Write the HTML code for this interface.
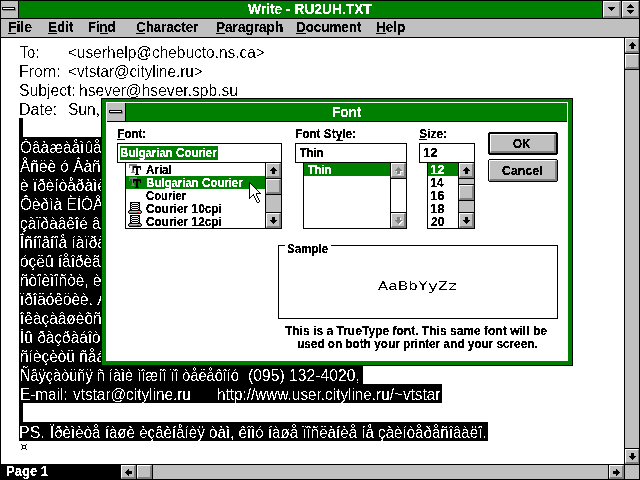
<!DOCTYPE html>
<html lang="en">
<head>
<meta charset="utf-8">
<title>Write - RU2UH.TXT</title>
<style>
*{margin:0;padding:0;box-sizing:border-box}
html,body{width:640px;height:480px;overflow:hidden;background:#fff}
body{position:relative;font-family:"Liberation Sans",sans-serif;color:#000}
.a{position:absolute}
.grp{position:absolute;left:0;top:0;width:0;height:0}
.ui{position:absolute;font-family:"Liberation Sans",sans-serif;font-weight:bold;font-size:14px;line-height:18px;height:18px;white-space:pre;transform-origin:0 0}
.sm{position:absolute;font-family:"Liberation Sans",sans-serif;font-weight:bold;font-size:13px;line-height:16px;height:16px;white-space:pre;transform-origin:0 0}
.doc{position:absolute;font-family:"Liberation Sans",sans-serif;font-size:16px;line-height:19px;height:19px;white-space:pre;transform-origin:0 0}
.mono{position:absolute;font-family:"Liberation Mono",monospace;font-size:16px;line-height:20px;height:20px;white-space:pre;transform-origin:0 0}
.doc,.mono{filter:url(#cr)}
.ui{filter:url(#cu)}
.sm{filter:url(#cb)}
.btn{position:absolute;background:#c0c0c0;border-style:solid;border-color:#fff #808080 #808080 #fff}
</style>
</head>
<body>
<svg width="0" height="0" style="position:absolute"><defs><filter id="cr" x="0" y="0" width="100%" height="100%" color-interpolation-filters="sRGB"><feComponentTransfer><feFuncA type="discrete" tableValues="0 0 0 0 0 0 0 0 0 0 0 1 1 1 1 1 1 1 1 1"/></feComponentTransfer></filter><filter id="cu" x="0" y="0" width="100%" height="100%" color-interpolation-filters="sRGB"><feComponentTransfer><feFuncA type="discrete" tableValues="0 0 1 1 1"/></feComponentTransfer></filter><filter id="cb" x="0" y="0" width="100%" height="100%" color-interpolation-filters="sRGB"><feComponentTransfer><feFuncA type="discrete" tableValues="0 1 1"/></feComponentTransfer></filter></defs></svg>
<!-- main window frame, title bar, menu bar -->
<div class="grp" id="write-window">
<div class="a" style="left:0px;top:0px;width:640px;height:1px;background:#000"></div>
<div class="a" style="left:0px;top:0px;width:1px;height:480px;background:#000"></div>
<div class="a" style="left:639px;top:0px;width:1px;height:480px;background:#000"></div>
<div class="a" style="left:1px;top:1px;width:17px;height:17px;background:#c0c0c0"></div>
<div class="a" style="left:18px;top:1px;width:1px;height:17px;background:#000"></div>
<div class="a" style="left:3px;top:8px;width:13px;height:3px;background:#808080"></div>
<div class="a" style="left:2px;top:7px;width:13px;height:3px;background:#000"></div>
<div class="a" style="left:3px;top:8px;width:11px;height:1px;background:#fff"></div>
<div class="a" style="left:19px;top:1px;width:583px;height:17px;background:#008000"></div>
<div class="a" style="left:602px;top:1px;width:1px;height:17px;background:#000"></div>
<div class="btn" style="left:603px;top:1px;width:18px;height:17px;border-width:1px 2px 2px 1px"></div>
<svg class="a" style="left:603px;top:1px" width="18" height="17" viewBox="0 0 18 17" shape-rendering="crispEdges"><path d="M5 6h7v1h-1v1h-1v1h-1v1h-1v-1h-1v-1h-1v-1h-1z" fill="#000"/></svg>
<div class="a" style="left:621px;top:1px;width:1px;height:17px;background:#000"></div>
<div class="btn" style="left:622px;top:1px;width:17px;height:17px;border-width:1px 1px 2px 1px"></div>
<svg class="a" style="left:622px;top:1px" width="17" height="17" viewBox="0 0 17 17" shape-rendering="crispEdges"><path d="M8 3h1v1h1v1h1v1h1v1h-7v-1h1v-1h1v-1h1z M5 9h7v1h-1v1h-1v1h-1v1h-1v-1h-1v-1h-1v-1h-1z" fill="#000"/></svg>
<div class="a" style="left:0px;top:18px;width:640px;height:1px;background:#000"></div>
<div class="ui" style="left:248.00px;top:0px;color:#fff;transform:scaleX(0.9841)">Write - RU2UH.TXT</div>
<div class="a" style="left:1px;top:19px;width:638px;height:18px;background:#c0c0c0"></div>
<div class="a" style="left:0px;top:37px;width:640px;height:1px;background:#000"></div>
<div class="ui" style="left:8.00px;top:18px;color:#000;transform:scaleX(1.0000)">File</div>
<div class="a" style="left:8px;top:33px;width:8px;height:1px;background:#000"></div>
<div class="ui" style="left:48.04px;top:18px;color:#000;transform:scaleX(0.9600)">Edit</div>
<div class="a" style="left:48px;top:33px;width:9px;height:1px;background:#000"></div>
<div class="ui" style="left:88.07px;top:18px;color:#000;transform:scaleX(0.9286)">Find</div>
<div class="a" style="left:100px;top:33px;width:8px;height:1px;background:#000"></div>
<div class="ui" style="left:136.05px;top:18px;color:#000;transform:scaleX(0.9531)">Character</div>
<div class="a" style="left:136px;top:33px;width:9px;height:1px;background:#000"></div>
<div class="ui" style="left:216.03px;top:18px;color:#000;transform:scaleX(0.9706)">Paragraph</div>
<div class="a" style="left:216px;top:33px;width:9px;height:1px;background:#000"></div>
<div class="ui" style="left:296.04px;top:18px;color:#000;transform:scaleX(0.9552)">Document</div>
<div class="a" style="left:296px;top:33px;width:10px;height:1px;background:#000"></div>
<div class="ui" style="left:376.03px;top:18px;color:#000;transform:scaleX(0.9655)">Help</div>
<div class="a" style="left:376px;top:33px;width:10px;height:1px;background:#000"></div>
</div>
<!-- document text -->
<div class="grp" id="document">
<div class="doc" style="left:20.00px;top:43px;color:#000;transform:scaleX(0.9000)">To:</div>
<div class="doc" style="left:68.03px;top:43px;color:#000;transform:scaleX(0.9653)">&lt;userhelp@chebucto.ns.ca&gt;</div>
<div class="doc" style="left:19.00px;top:62px;color:#000;transform:scaleX(1.0000)">From:</div>
<div class="doc" style="left:68.05px;top:62px;color:#000;transform:scaleX(0.9500)">&lt;vtstar@cityline.ru&gt;</div>
<div class="doc" style="left:19.02px;top:81px;color:#000;transform:scaleX(0.9818)">Subject:</div>
<div class="doc" style="left:79.02px;top:81px;color:#000;transform:scaleX(0.9752)">hsever@hsever.spb.su</div>
<div class="doc" style="left:19.00px;top:100px;color:#000;transform:scaleX(1.0000)">Date:</div>
<div class="doc" style="left:68.03px;top:100px;color:#000;transform:scaleX(0.9707)">Sun, 12 Oct 1997 18:24:51 +0400</div>
<div class="a" style="left:19px;top:118px;width:4px;height:19px;background:#000"></div>
<div class="a" style="left:19px;top:137px;width:460px;height:228px;background:#000"></div>
<div class="doc" style="left:19.5px;top:138px;color:#fff;transform:scaleX(0.965)">Óâàæàåìûå ãîñïîäà!</div>
<div class="doc" style="left:19.5px;top:157px;color:#fff;transform:scaleX(0.965)">Åñëè ó Âàñ åñòü ëàçåðíûé ïðèíòåð èëè êîïèðîâàëüíûé àïïàðàò</div>
<div class="doc" style="left:19.5px;top:176px;color:#fff;transform:scaleX(0.965)">è ïðèíòåðàìè ðàäîñòü â ðàáîòå, òî íàøå ïðåäëîæåíèå äëÿ Âàñ.</div>
<div class="doc" style="left:19.5px;top:195px;color:#fff;transform:scaleX(0.965)">Ôèðìà ÈÍÒÅÊ ïðåäëàãàåò óñëóãè ïî âîññòàíîâëåíèþ êàðòðèäæåé,</div>
<div class="doc" style="left:19.5px;top:214px;color:#fff;transform:scaleX(0.965)">çàïðàâêîé â òàêæå ðåìîíòîì è îáñëóæèâàíèåì îðãòåõíèêè.</div>
<div class="doc" style="left:19.5px;top:233px;color:#fff;transform:scaleX(0.965)">Îñíîâíîå íàïðàâëåíèå íàøåé ðàáîòû - êà÷åñòâî è ñðîêè,</div>
<div class="doc" style="left:19.5px;top:252px;color:#fff;transform:scaleX(0.965)">óçëû íåîðèãèíàëüíûå ìû íå ñòàâèì, òîëüêî ôèðìåííûå.</div>
<div class="doc" style="left:19.5px;top:271px;color:#fff;transform:scaleX(0.965)">ñòîèìîñòè, èìåþòñÿ ñêèäêè äëÿ ïîñòîÿííûõ êëèåíòîâ íàøèõ.</div>
<div class="doc" style="left:19.5px;top:290px;color:#fff;transform:scaleX(0.965)">ïðîäóêöèè. À òàêæå áåñïëàòíàÿ äîñòàâêà ïî ãîðîäó Ìîñêâå.</div>
<div class="doc" style="left:19.5px;top:309px;color:#fff;transform:scaleX(0.965)">îêàçàâøèõñÿ â òðóäíîé ñèòóàöèè ìû âûðó÷èì â òîò æå äåíü.</div>
<div class="doc" style="left:19.5px;top:328px;color:#fff;transform:scaleX(0.965)">Ìû ðàçðàáîòàëè ñèñòåìó ãèáêèõ öåí è áóäåì ðàäû ñîòðóäíè÷àòü.</div>
<div class="doc" style="left:19.5px;top:347px;color:#fff;transform:scaleX(0.965)">ñíèçèòü ñåáåñòîèìîñòü ñîäåðæàíèÿ îôèñíîé òåõíèêè âäâîå.</div>
<div class="a" style="left:19px;top:365px;width:344px;height:19px;background:#000"></div>
<div class="a" style="left:19px;top:384px;width:423px;height:19px;background:#000"></div>
<div class="a" style="left:19px;top:403px;width:4px;height:19px;background:#000"></div>
<div class="a" style="left:19px;top:422px;width:469px;height:19px;background:#000"></div>
<div class="doc" style="left:20.09px;top:366px;color:#fff;transform:scaleX(0.9083)">Ñâÿçàòüñÿ ñ íàìè ìîæíî ïî òåëåôîíó</div>
<div class="doc" style="left:248.02px;top:366px;color:#fff;transform:scaleX(0.9821)">(095) 132-4020,</div>
<div class="doc" style="left:20.04px;top:385px;color:#fff;transform:scaleX(0.9574)">E-mail:</div>
<div class="doc" style="left:73.00px;top:385px;color:#fff;transform:scaleX(0.9590)">vtstar@cityline.ru</div>
<div class="doc" style="left:217.04px;top:385px;color:#fff;transform:scaleX(0.9569)">http://www.user.cityline.ru/~vtstar</div>
<div class="doc" style="left:19.00px;top:423px;color:#fff;transform:scaleX(1.0000)">PS.</div>
<div class="doc" style="left:50.00px;top:423px;color:#fff;transform:scaleX(0.9457)">Ïðèìèòå íàøè èçâèíåíèÿ òàì, êîìó íàøå ïîñëàíèå íå çàèíòåðåñîâàëî.</div>
<svg class="a" style="left:21px;top:444px" width="6" height="6" viewBox="0 0 6 6" shape-rendering="crispEdges"><path d="M0 0h1v1h-1zM5 0h1v1h-1zM0 5h1v1h-1zM5 5h1v1h-1zM1 1h4v4h-4zM2 2v2h2v-2z" fill-rule="evenodd" fill="#000"/></svg>
</div>
<!-- Font dialog -->
<div class="grp" id="font-dialog">
<div class="a" style="left:101px;top:98px;width:472px;height:268px;background:#000"></div>
<div class="a" style="left:102px;top:99px;width:470px;height:266px;background:#008000"></div>
<div class="a" style="left:106px;top:102px;width:462px;height:259px;background:#fff"></div>
<div class="a" style="left:107px;top:103px;width:18px;height:18px;background:#c0c0c0"></div>
<div class="a" style="left:110px;top:111px;width:13px;height:3px;background:#808080"></div>
<div class="a" style="left:109px;top:110px;width:13px;height:3px;background:#000"></div>
<div class="a" style="left:110px;top:111px;width:11px;height:1px;background:#fff"></div>
<div class="a" style="left:125px;top:103px;width:1px;height:18px;background:#000"></div>
<div class="a" style="left:126px;top:103px;width:441px;height:18px;background:#008000"></div>
<div class="a" style="left:107px;top:121px;width:460px;height:1px;background:#000"></div>
<div class="ui" style="left:332.03px;top:103px;color:#fff;transform:scaleX(0.9655)">Font</div>
<div class="sm" style="left:117.10px;top:126px;color:#000;transform:scaleX(0.9000)">Font:</div>
<div class="a" style="left:117px;top:139px;width:8px;height:1px;background:#000"></div>
<div class="sm" style="left:295.09px;top:126px;color:#000;transform:scaleX(0.9077)">Font Style:</div>
<div class="a" style="left:336px;top:140px;width:7px;height:1px;background:#000"></div>
<div class="sm" style="left:419.07px;top:126px;color:#000;transform:scaleX(0.9286)">Size:</div>
<div class="a" style="left:419px;top:139px;width:8px;height:1px;background:#000"></div>
<div class="a" style="left:117px;top:143px;width:165px;height:20px;background:#000"></div>
<div class="a" style="left:118px;top:144px;width:163px;height:18px;background:#fff"></div>
<div class="a" style="left:295px;top:143px;width:112px;height:20px;background:#000"></div>
<div class="a" style="left:296px;top:144px;width:110px;height:18px;background:#fff"></div>
<div class="a" style="left:419px;top:143px;width:56px;height:20px;background:#000"></div>
<div class="a" style="left:420px;top:144px;width:54px;height:18px;background:#fff"></div>
<div class="a" style="left:120px;top:146px;width:98px;height:14px;background:#008000"></div>
<div class="sm" style="left:120.12px;top:145px;color:#fff;transform:scaleX(0.8807)">Bulgarian Courier</div>
<div class="sm" style="left:300.00px;top:145px;color:#000;transform:scaleX(0.8519)">Thin</div>
<div class="sm" style="left:423.00px;top:145px;color:#000;transform:scaleX(1.0000)">12</div>
<div class="a" style="left:125px;top:162px;width:157px;height:67px;background:#000"></div>
<div class="a" style="left:126px;top:163px;width:155px;height:65px;background:#fff"></div>
<div class="a" style="left:303px;top:162px;width:104px;height:67px;background:#000"></div>
<div class="a" style="left:304px;top:163px;width:102px;height:65px;background:#fff"></div>
<div class="a" style="left:427px;top:162px;width:48px;height:67px;background:#000"></div>
<div class="a" style="left:428px;top:163px;width:46px;height:65px;background:#fff"></div>
<div class="a" style="left:126px;top:176px;width:139px;height:13px;background:#008000"></div>
<svg class="a" style="left:129px;top:164px" width="12" height="11" viewBox="0 0 12 11" shape-rendering="crispEdges"><path d="M0 0h8v4h-1v-2h-2v6h1v1h-4v-1h1v-6h-2v2h-1z" fill="#808080"/><path transform="translate(4,2)" d="M0 0h8v4h-1v-2h-2v6h1v1h-4v-1h1v-6h-2v2h-1z" fill="#000"/></svg>
<div class="sm" style="left:146.00px;top:162px;color:#000;transform:scaleX(0.8929)">Arial</div>
<svg class="a" style="left:129px;top:177px" width="12" height="11" viewBox="0 0 12 11" shape-rendering="crispEdges"><path d="M0 0h8v4h-1v-2h-2v6h1v1h-4v-1h1v-6h-2v2h-1z" fill="#808080"/><path transform="translate(4,2)" d="M0 0h8v4h-1v-2h-2v6h1v1h-4v-1h1v-6h-2v2h-1z" fill="#000"/></svg>
<div class="sm" style="left:146.12px;top:175px;color:#fff;transform:scaleX(0.8807)">Bulgarian Courier</div>
<div class="sm" style="left:146.13px;top:188px;color:#000;transform:scaleX(0.8667)">Courier</div>
<svg class="a" style="left:128px;top:202px" width="14" height="12" viewBox="0 0 14 12" shape-rendering="crispEdges"><rect x="2" y="0" width="10" height="9" fill="#000"/><rect x="3" y="1" width="8" height="7" fill="#fff"/><rect x="4" y="2" width="6" height="1" fill="#000"/><rect x="4" y="4" width="6" height="1" fill="#000"/><rect x="4" y="6" width="6" height="1" fill="#000"/><path d="M3 1h1v1h-1zM10 1h1v1h-1zM3 3h1v1h-1zM10 3h1v1h-1zM3 5h1v1h-1zM10 5h1v1h-1zM3 7h1v1h-1zM10 7h1v1h-1z" fill="#000"/><rect x="1" y="8" width="12" height="4" fill="#000"/><rect x="0" y="9" width="14" height="2" fill="#000"/><rect x="1" y="9" width="12" height="2" fill="#808080"/><rect x="2" y="9" width="10" height="1" fill="#c0c0c0"/><rect x="9" y="10" width="2" height="1" fill="#f00"/></svg>
<div class="sm" style="left:146.09px;top:201px;color:#000;transform:scaleX(0.9136)">Courier 10cpi</div>
<svg class="a" style="left:128px;top:215px" width="14" height="12" viewBox="0 0 14 12" shape-rendering="crispEdges"><rect x="2" y="0" width="10" height="9" fill="#000"/><rect x="3" y="1" width="8" height="7" fill="#fff"/><rect x="4" y="2" width="6" height="1" fill="#000"/><rect x="4" y="4" width="6" height="1" fill="#000"/><rect x="4" y="6" width="6" height="1" fill="#000"/><path d="M3 1h1v1h-1zM10 1h1v1h-1zM3 3h1v1h-1zM10 3h1v1h-1zM3 5h1v1h-1zM10 5h1v1h-1zM3 7h1v1h-1zM10 7h1v1h-1z" fill="#000"/><rect x="1" y="8" width="12" height="4" fill="#000"/><rect x="0" y="9" width="14" height="2" fill="#000"/><rect x="1" y="9" width="12" height="2" fill="#808080"/><rect x="2" y="9" width="10" height="1" fill="#c0c0c0"/><rect x="9" y="10" width="2" height="1" fill="#f00"/></svg>
<div class="sm" style="left:146.09px;top:214px;color:#000;transform:scaleX(0.9136)">Courier 12cpi</div>
<div class="a" style="left:265px;top:163px;width:1px;height:65px;background:#000"></div>
<div class="a" style="left:266px;top:163px;width:15px;height:65px;background:#c0c0c0"></div>
<div class="btn" style="left:266px;top:163px;width:15px;height:15px;border-width:1px 2px 2px 1px"></div>
<div class="a" style="left:266px;top:178px;width:15px;height:1px;background:#000"></div>
<div class="btn" style="left:266px;top:213px;width:15px;height:15px;border-width:1px 2px 2px 1px"></div>
<div class="a" style="left:266px;top:212px;width:15px;height:1px;background:#000"></div>
<svg class="a" style="left:266px;top:163px" width="15" height="15" viewBox="0 0 15 15" shape-rendering="crispEdges"><path d="M7 4h1v1h1v1h1v1h1v1h-2v3h-3v-3h-2v-1h1v-1h1v-1h1z" fill="#000"/></svg>
<svg class="a" style="left:266px;top:213px" width="15" height="15" viewBox="0 0 15 15" shape-rendering="crispEdges"><path d="M6 4h3v3h2v1h-1v1h-1v1h-1v1h-1v-1h-1v-1h-1v-1h-1v-1h2z" fill="#000"/></svg>
<div class="a" style="left:266px;top:178px;width:15px;height:1px;background:#000"></div>
<div class="btn" style="left:266px;top:179px;width:15px;height:15px;border-width:1px 2px 2px 1px"></div>
<div class="a" style="left:266px;top:194px;width:15px;height:1px;background:#000"></div>
<div class="a" style="left:304px;top:163px;width:86px;height:13px;background:#008000"></div>
<div class="sm" style="left:308.00px;top:162px;color:#fff;transform:scaleX(0.8519)">Thin</div>
<div class="a" style="left:390px;top:163px;width:1px;height:65px;background:#000"></div>
<div class="a" style="left:391px;top:163px;width:15px;height:65px;background:#c0c0c0"></div>
<div class="btn" style="left:391px;top:163px;width:15px;height:15px;border-width:1px 2px 2px 1px"></div>
<div class="a" style="left:391px;top:178px;width:15px;height:1px;background:#000"></div>
<div class="btn" style="left:391px;top:213px;width:15px;height:15px;border-width:1px 2px 2px 1px"></div>
<div class="a" style="left:391px;top:212px;width:15px;height:1px;background:#000"></div>
<svg class="a" style="left:392px;top:164px" width="15" height="15" viewBox="0 0 15 15" shape-rendering="crispEdges"><path d="M7 4h1v1h1v1h1v1h1v1h-2v3h-3v-3h-2v-1h1v-1h1v-1h1z" fill="#fff"/></svg>
<svg class="a" style="left:391px;top:163px" width="15" height="15" viewBox="0 0 15 15" shape-rendering="crispEdges"><path d="M7 4h1v1h1v1h1v1h1v1h-2v3h-3v-3h-2v-1h1v-1h1v-1h1z" fill="#808080"/></svg>
<svg class="a" style="left:392px;top:214px" width="15" height="15" viewBox="0 0 15 15" shape-rendering="crispEdges"><path d="M6 4h3v3h2v1h-1v1h-1v1h-1v1h-1v-1h-1v-1h-1v-1h-1v-1h2z" fill="#fff"/></svg>
<svg class="a" style="left:391px;top:213px" width="15" height="15" viewBox="0 0 15 15" shape-rendering="crispEdges"><path d="M6 4h3v3h2v1h-1v1h-1v1h-1v1h-1v-1h-1v-1h-1v-1h-1v-1h2z" fill="#808080"/></svg>
<div class="a" style="left:391px;top:179px;width:15px;height:33px;background:#fff"></div>
<div class="a" style="left:428px;top:163px;width:30px;height:13px;background:#008000"></div>
<div class="sm" style="left:430.00px;top:162px;color:#fff;transform:scaleX(1.0000)">12</div>
<div class="sm" style="left:430.07px;top:175px;color:#000;transform:scaleX(0.9286)">14</div>
<div class="sm" style="left:430.00px;top:188px;color:#000;transform:scaleX(1.0000)">16</div>
<div class="sm" style="left:430.00px;top:201px;color:#000;transform:scaleX(1.0000)">18</div>
<div class="sm" style="left:431.00px;top:214px;color:#000;transform:scaleX(0.9286)">20</div>
<div class="a" style="left:458px;top:163px;width:1px;height:65px;background:#000"></div>
<div class="a" style="left:459px;top:163px;width:15px;height:65px;background:#c0c0c0"></div>
<div class="btn" style="left:459px;top:163px;width:15px;height:15px;border-width:1px 2px 2px 1px"></div>
<div class="a" style="left:459px;top:178px;width:15px;height:1px;background:#000"></div>
<div class="btn" style="left:459px;top:213px;width:15px;height:15px;border-width:1px 2px 2px 1px"></div>
<div class="a" style="left:459px;top:212px;width:15px;height:1px;background:#000"></div>
<svg class="a" style="left:459px;top:163px" width="15" height="15" viewBox="0 0 15 15" shape-rendering="crispEdges"><path d="M7 4h1v1h1v1h1v1h1v1h-2v3h-3v-3h-2v-1h1v-1h1v-1h1z" fill="#000"/></svg>
<svg class="a" style="left:459px;top:213px" width="15" height="15" viewBox="0 0 15 15" shape-rendering="crispEdges"><path d="M6 4h3v3h2v1h-1v1h-1v1h-1v1h-1v-1h-1v-1h-1v-1h-1v-1h2z" fill="#000"/></svg>
<div class="a" style="left:459px;top:184px;width:15px;height:1px;background:#000"></div>
<div class="btn" style="left:459px;top:185px;width:15px;height:15px;border-width:1px 2px 2px 1px"></div>
<div class="a" style="left:459px;top:200px;width:15px;height:1px;background:#000"></div>
<div class="a" style="left:489px;top:132px;width:68px;height:23px;background:#000"></div>
<div class="a" style="left:488px;top:133px;width:70px;height:21px;background:#000"></div>
<div class="btn" style="left:490px;top:134px;width:66px;height:19px;border-width:1px 2px 2px 1px"></div>
<div class="sm" style="left:513.11px;top:136px;color:#000;transform:scaleX(0.8889)">OK</div>
<div class="a" style="left:489px;top:159px;width:68px;height:23px;background:#000"></div>
<div class="a" style="left:488px;top:160px;width:70px;height:21px;background:#000"></div>
<div class="btn" style="left:489px;top:160px;width:68px;height:21px;border-width:1px 2px 2px 1px"></div>
<div class="sm" style="left:502.05px;top:163px;color:#000;transform:scaleX(0.9512)">Cancel</div>
<div class="a" style="left:278px;top:245px;width:280px;height:74px;background:#000"></div>
<div class="a" style="left:279px;top:246px;width:278px;height:72px;background:#fff"></div>
<div class="a" style="left:285px;top:245px;width:46px;height:1px;background:#fff"></div>
<div class="sm" style="left:287.11px;top:241px;color:#000;transform:scaleX(0.8889)">Sample</div>
<div class="mono" style="left:378.00px;top:278.24px;color:#000;transform:scale(1.0395,0.84)">AaBbYyZz</div>
<div class="sm" style="left:285.00px;top:323px;color:#000;transform:scaleX(0.9258)">This is a TrueType font. This same font will be</div>
<div class="sm" style="left:297.09px;top:336px;color:#000;transform:scaleX(0.9053)">used on both your printer and your screen.</div>
<svg class="a" style="left:249px;top:182px" width="12" height="21" viewBox="0 0 12 21" shape-rendering="crispEdges"><path d="M0 0h1v1h-1zM0 1h2v1h-2zM0 2h1v1h-1zM2 2h1v1h-1zM0 3h1v1h-1zM3 3h1v1h-1zM0 4h1v1h-1zM4 4h1v1h-1zM0 5h1v1h-1zM5 5h1v1h-1zM0 6h1v1h-1zM6 6h1v1h-1zM0 7h1v1h-1zM7 7h1v1h-1zM0 8h1v1h-1zM8 8h1v1h-1zM0 9h1v1h-1zM9 9h1v1h-1zM0 10h1v1h-1zM10 10h1v1h-1zM0 11h1v1h-1zM7 11h5v1h-5zM0 12h1v1h-1zM4 12h1v1h-1zM7 12h1v1h-1zM0 13h1v1h-1zM3 13h2v1h-2zM7 13h1v1h-1zM0 14h1v1h-1zM2 14h1v1h-1zM5 14h1v1h-1zM8 14h1v1h-1zM0 15h2v1h-2zM5 15h1v1h-1zM8 15h1v1h-1zM0 16h1v1h-1zM6 16h1v1h-1zM9 16h1v1h-1zM6 17h1v1h-1zM9 17h1v1h-1zM7 18h1v1h-1zM10 18h1v1h-1zM7 19h1v1h-1zM10 19h1v1h-1zM8 20h2v1h-2z" fill="#000"/><path d="M1 2h1v1h-1zM1 3h2v1h-2zM1 4h3v1h-3zM1 5h4v1h-4zM1 6h5v1h-5zM1 7h6v1h-6zM1 8h7v1h-7zM1 9h8v1h-8zM1 10h9v1h-9zM1 11h6v1h-6zM1 12h3v1h-3zM5 12h2v1h-2zM1 13h2v1h-2zM5 13h2v1h-2zM1 14h1v1h-1zM6 14h2v1h-2zM6 15h2v1h-2zM7 16h2v1h-2zM7 17h2v1h-2zM8 18h2v1h-2zM8 19h2v1h-2z" fill="#fff"/></svg>
</div>
<!-- status bar and scrollbars -->
<div class="grp" id="scrollbars-status">
<div class="a" style="left:624px;top:38px;width:1px;height:427px;background:#000"></div>
<div class="a" style="left:625px;top:38px;width:14px;height:426px;background:#c0c0c0"></div>
<div class="btn" style="left:625px;top:38px;width:14px;height:15px;border-width:1px 1px 2px 1px"></div>
<svg class="a" style="left:625px;top:38px" width="15" height="15" viewBox="0 0 15 15" shape-rendering="crispEdges"><path d="M7 4h1v1h1v1h1v1h1v1h-2v3h-3v-3h-2v-1h1v-1h1v-1h1z" fill="#000"/></svg>
<div class="a" style="left:625px;top:53px;width:14px;height:1px;background:#000"></div>
<div class="btn" style="left:625px;top:54px;width:14px;height:15px;border-width:1px 1px 2px 1px"></div>
<div class="a" style="left:625px;top:69px;width:14px;height:1px;background:#000"></div>
<div class="a" style="left:625px;top:448px;width:14px;height:1px;background:#000"></div>
<div class="btn" style="left:625px;top:449px;width:14px;height:15px;border-width:1px 1px 2px 1px"></div>
<svg class="a" style="left:625px;top:449px" width="15" height="15" viewBox="0 0 15 15" shape-rendering="crispEdges"><path d="M6 4h3v3h2v1h-1v1h-1v1h-1v1h-1v-1h-1v-1h-1v-1h-1v-1h2z" fill="#000"/></svg>
<div class="a" style="left:0px;top:464px;width:640px;height:16px;background:#000"></div>
<div class="a" style="left:121px;top:465px;width:518px;height:14px;background:#c0c0c0"></div>
<div class="btn" style="left:121px;top:465px;width:15px;height:14px;border-width:1px 2px 2px 1px"></div>
<svg class="a" style="left:121px;top:465px" width="15" height="15" viewBox="0 0 15 15" shape-rendering="crispEdges"><path d="M4 7h1v-1h1v-1h1v-1h1v2h3v3h-3v2h-1v-1h-1v-1h-1v-1h-1z" fill="#000"/></svg>
<div class="a" style="left:136px;top:465px;width:1px;height:14px;background:#000"></div>
<div class="btn" style="left:137px;top:465px;width:15px;height:14px;border-width:1px 2px 2px 1px"></div>
<div class="a" style="left:152px;top:465px;width:1px;height:14px;background:#000"></div>
<div class="a" style="left:608px;top:465px;width:1px;height:14px;background:#000"></div>
<div class="btn" style="left:609px;top:465px;width:15px;height:14px;border-width:1px 2px 2px 1px"></div>
<svg class="a" style="left:609px;top:465px" width="15" height="15" viewBox="0 0 15 15" shape-rendering="crispEdges"><path d="M4 6h3v-2h1v1h1v1h1v1h1v1h-1v1h-1v1h-1v1h-1v-2h-3z" fill="#000"/></svg>
<div class="a" style="left:624px;top:465px;width:1px;height:14px;background:#000"></div>
<div class="ui" style="left:6.07px;top:462px;color:#fff;transform:scaleX(0.9318)">Page 1</div>
</div>
</body>
</html>
